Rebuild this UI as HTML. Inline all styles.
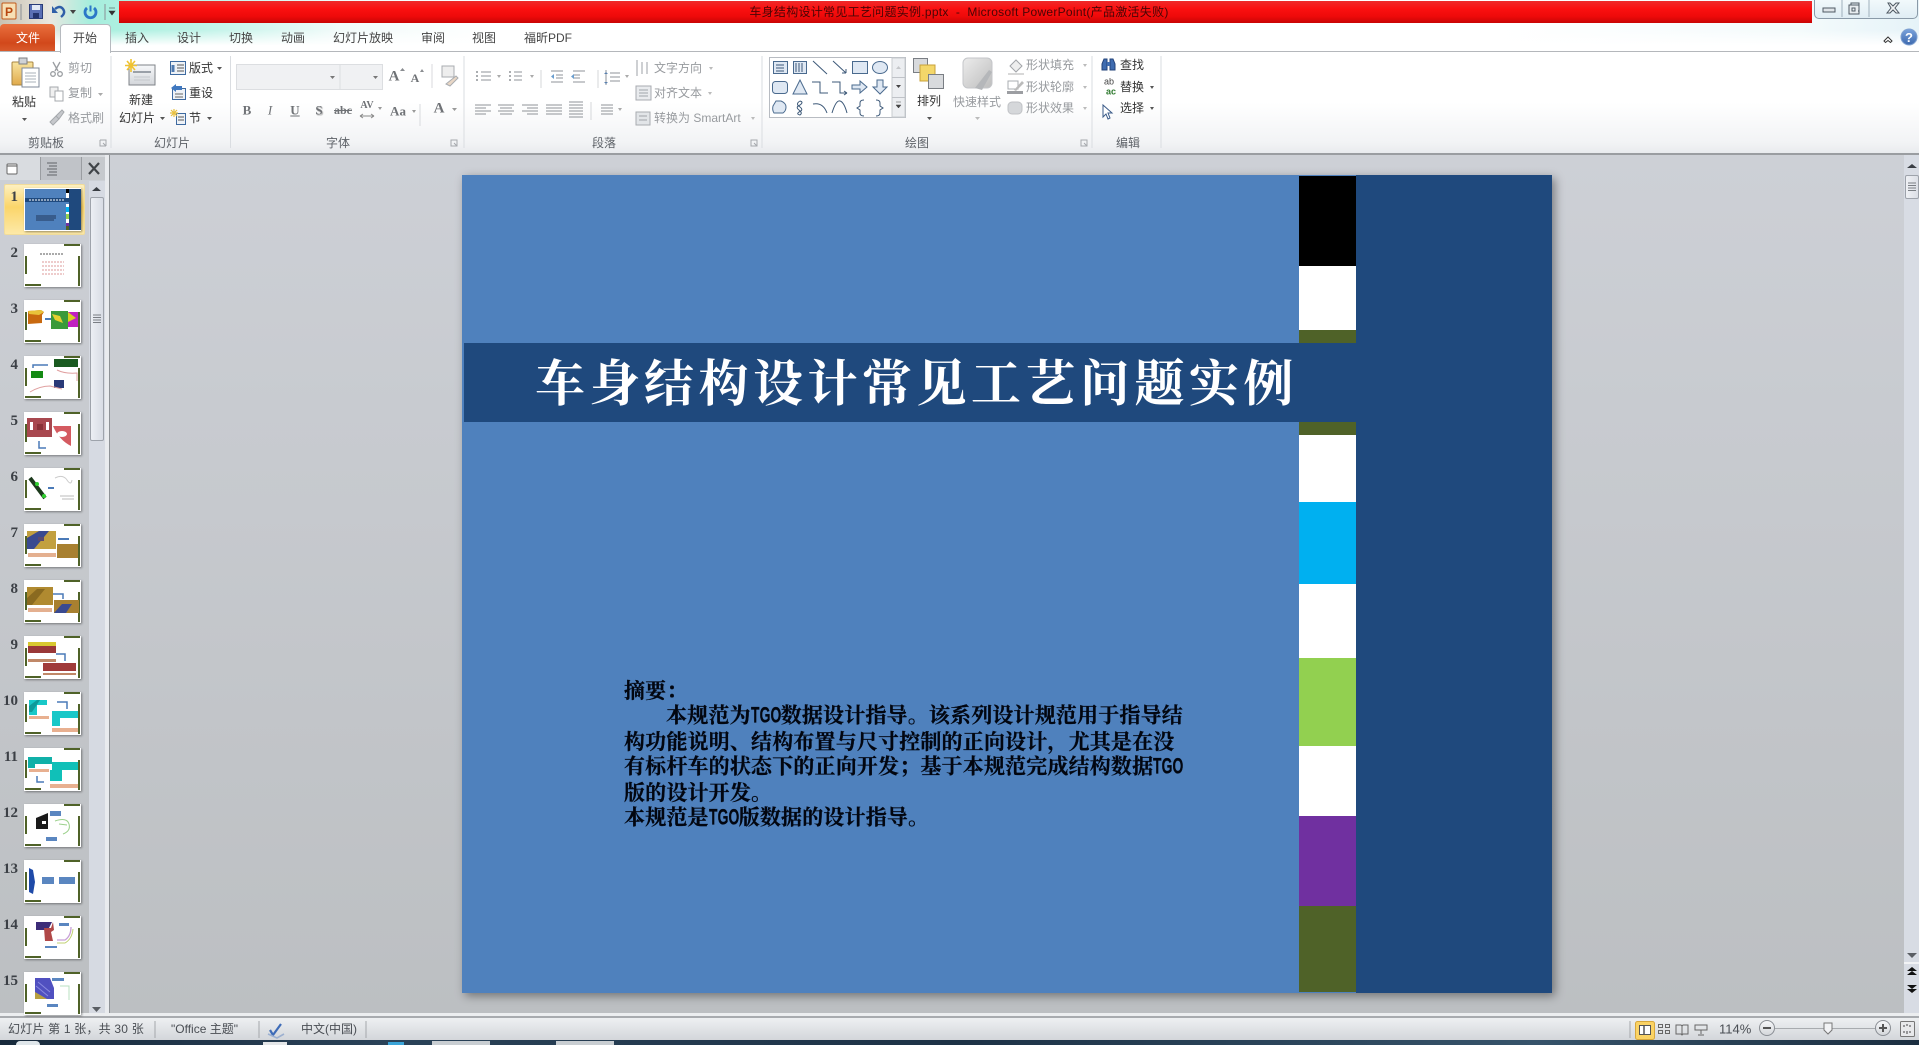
<!DOCTYPE html>
<html lang="zh-CN">
<head>
<meta charset="utf-8">
<title>PowerPoint</title>
<style>
html,body{margin:0;padding:0;width:1919px;height:1045px;overflow:hidden;background:#c4c7cb}
body{position:relative;font-family:"Liberation Sans","Noto Sans CJK SC",sans-serif;font-size:12px;color:#444}
.a{position:absolute}
.t{position:absolute;white-space:nowrap;transform:translateY(-50%);line-height:1}
.c{position:absolute;white-space:nowrap;transform:translate(-50%,-50%);line-height:1}
.g{color:#979a9e}
.lab{color:#5e6268}
.s{font-family:"Liberation Serif",serif;font-weight:700;color:#6f7276}
.n{position:absolute;font-family:"Liberation Serif",serif;font-weight:700;font-size:15px;color:#3c4046;text-align:right;width:20px;left:0;line-height:1}
.body{position:absolute;left:624px;white-space:nowrap;font-family:"Noto Serif CJK SC",serif;font-weight:700;font-size:21px;letter-spacing:.17px;line-height:26px;color:#020610;-webkit-text-stroke:.25px #020610;transform:translateY(-50%)}
.tg{display:inline-block;width:30px;overflow:visible}
.tg i{display:inline-block;font-style:normal;font-family:"Liberation Sans",sans-serif;font-weight:700;font-size:22px;transform:scaleX(.63);transform-origin:0 50%}
svg{position:absolute}
</style>
</head>
<body>

<!-- glass top -->
<div class="a" style="left:0;top:0;width:1919px;height:52px;background:linear-gradient(90deg,#c9c2b2 0,#e9e7e0 50px,#a6eedd 90px,#bff3e8 200px,#f2fbfa 340px,#fff 500px,#fff 1500px,#f4fbfc 1800px,#e6f3f8 1919px)"></div>
<div class="a" style="left:0;top:30px;width:1919px;height:22px;background:linear-gradient(180deg,rgba(255,255,255,0),#fff 70%)"></div>
<div class="a" style="left:119px;top:1px;width:1693px;height:22px;background:linear-gradient(180deg,#ee2a2a 0,#fb1010 35%,#ee0a0a 70%,#c90505 100%)"></div>
<div class="c" style="left:959px;top:12px;color:#480606;letter-spacing:.28px">车身结构设计常见工艺问题实例.pptx&nbsp; - &nbsp;Microsoft PowerPoint(产品激活失败)</div>

<!-- window buttons -->
<div class="a" style="left:1814px;top:-2px;width:102px;height:19px;border:1px solid #8a9aa8;border-radius:0 0 5px 5px;background:linear-gradient(180deg,#f3fafc,#e0edf4)"></div>

<!-- tabs -->
<div class="a" style="left:0;top:24px;width:55px;height:27px;border-radius:4px 4px 0 0;background:linear-gradient(180deg,#e9703e,#d2481b 70%,#d85a2c)"></div>
<div class="c" style="left:28px;top:38px;color:#fff">文件</div>
<div class="a" style="left:60px;top:24px;width:49px;height:28px;border:1px solid #b6babf;border-bottom:none;border-radius:4px 4px 0 0;background:#fff;z-index:2"></div>
<div class="c" style="left:85px;top:38px;z-index:3">开始</div>
<div class="c" style="left:137px;top:38px">插入</div>
<div class="c" style="left:189px;top:38px">设计</div>
<div class="c" style="left:241px;top:38px">切换</div>
<div class="c" style="left:293px;top:38px">动画</div>
<div class="c" style="left:363px;top:38px">幻灯片放映</div>
<div class="c" style="left:433px;top:38px">审阅</div>
<div class="c" style="left:484px;top:38px">视图</div>
<div class="c" style="left:548px;top:38px">福昕PDF</div>

<!-- ribbon -->
<div class="a" style="left:0;top:51px;width:1919px;height:102px;background:linear-gradient(180deg,#fff 0,#fff 50%,#f2f3f5 90%,#e9ebee 100%);border-top:1px solid #b4b7bb;box-sizing:border-box"></div>
<div class="a" style="left:0;top:153px;width:1919px;height:2px;background:#9a9da1"></div>

<!-- main background -->
<div class="a" style="left:0;top:155px;width:1919px;height:863px;background:linear-gradient(180deg,#cdd0d6 0,#bcbfc2 100%)"></div>

<!-- ribbon labels -->
<div class="c lab" style="left:46px;top:143px">剪贴板</div>
<div class="c lab" style="left:172px;top:143px">幻灯片</div>
<div class="c lab" style="left:338px;top:143px">字体</div>
<div class="c lab" style="left:604px;top:143px">段落</div>
<div class="c lab" style="left:917px;top:143px">绘图</div>
<div class="c lab" style="left:1128px;top:143px">编辑</div>

<div class="c" style="left:24px;top:102px;color:#333">粘贴</div>
<div class="t g" style="left:68px;top:68px">剪切</div>
<div class="t g" style="left:68px;top:93px">复制</div>
<div class="t g" style="left:68px;top:118px">格式刷</div>
<div class="c" style="left:141px;top:100px;color:#333">新建</div>
<div class="t" style="left:119px;top:118px;color:#333">幻灯片</div>
<div class="t" style="left:189px;top:68px;color:#333">版式</div>
<div class="t" style="left:189px;top:93px;color:#333">重设</div>
<div class="t" style="left:189px;top:118px;color:#333">节</div>
<div class="t g" style="left:343px;top:76px">32</div>

<div class="c s" style="left:394px;top:77px;font-size:15px">A</div>
<div class="c s" style="left:415px;top:78px;font-size:12px">A</div>
<div class="c s" style="left:247px;top:110px;font-size:13px">B</div>
<div class="c s" style="left:270px;top:110px;font-size:13px;font-style:italic;font-weight:400">I</div>
<div class="c s" style="left:295px;top:110px;font-size:13px;text-decoration:underline">U</div>
<div class="c s" style="left:319px;top:110px;font-size:13px;text-shadow:1px 1px 1px #aaa">S</div>
<div class="c s" style="left:343px;top:110px;font-size:12px;text-decoration:line-through">abc</div>
<div class="c s" style="left:367px;top:106px;font-size:10px">AV</div>
<div class="c s" style="left:398px;top:111px;font-size:13px">Aa</div>
<div class="c s" style="left:439px;top:109px;font-size:15px">A</div>

<div class="t g" style="left:654px;top:68px">文字方向</div>
<div class="t g" style="left:654px;top:93px">对齐文本</div>
<div class="t g" style="left:654px;top:118px">转换为 SmartArt</div>

<div class="c" style="left:929px;top:101px;color:#333">排列</div>
<div class="c g" style="left:977px;top:102px">快速样式</div>
<div class="t g" style="left:1026px;top:65px">形状填充</div>
<div class="t g" style="left:1026px;top:87px">形状轮廓</div>
<div class="t g" style="left:1026px;top:108px">形状效果</div>
<div class="t" style="left:1120px;top:65px;color:#333">查找</div>
<div class="t" style="left:1120px;top:87px;color:#333">替换</div>
<div class="t" style="left:1120px;top:108px;color:#333">选择</div>
<div class="c" style="left:1109px;top:82px;font-size:9px;color:#444">ab</div>
<div class="c" style="left:1111px;top:92px;font-size:9px;font-weight:700;color:#2f7a2f">ac</div>

<!-- left panel -->
<div class="a" style="left:0;top:155px;width:105px;height:2px;background:#d8dbdf"></div>
<div class="a" style="left:0;top:157px;width:40px;height:23px;background:#d9dce0"></div>
<div class="a" style="left:40px;top:157px;width:41px;height:23px;background:#c0c3c8;border-left:1px solid #9a9da1;box-sizing:border-box"></div>
<div class="a" style="left:81px;top:157px;width:24px;height:23px;background:#c6c9cd;border-left:1px solid #9a9da1;box-sizing:border-box"></div>
<div class="a" style="left:89px;top:181px;width:16px;height:836px;background:#d6dae2"></div>
<div class="a" style="left:90px;top:197px;width:14px;height:244px;background:linear-gradient(90deg,#eceff4,#d8dce4);border:1px solid #9ea3ab;box-sizing:border-box;border-radius:2px"></div>
<div class="a" style="left:105px;top:155px;width:5px;height:862px;background:#e9ebee;border-right:1px solid #8e9296;box-sizing:border-box"></div>
<div class="a" style="left:4px;top:184px;width:81px;height:51px;background:linear-gradient(180deg,#fdf0c0,#fbd56a 45%,#fde9a8);border:1px solid #f1dc9a;box-sizing:border-box;border-radius:2px"></div>

<div class="n" style="top:190px;left:-2px">1</div><div class="n" style="top:246px;left:-2px">2</div>
<div class="n" style="top:302px;left:-2px">3</div><div class="n" style="top:358px;left:-2px">4</div>
<div class="n" style="top:414px;left:-2px">5</div><div class="n" style="top:470px;left:-2px">6</div>
<div class="n" style="top:526px;left:-2px">7</div><div class="n" style="top:582px;left:-2px">8</div>
<div class="n" style="top:638px;left:-2px">9</div><div class="n" style="top:694px;left:-2px">10</div>
<div class="n" style="top:750px;left:-2px">11</div><div class="n" style="top:806px;left:-2px">12</div>
<div class="n" style="top:862px;left:-2px">13</div><div class="n" style="top:918px;left:-2px">14</div>
<div class="n" style="top:974px;left:-2px">15</div>

<!-- right scrollbar -->
<div class="a" style="left:1904px;top:155px;width:15px;height:858px;background:#d8dce4"></div>
<div class="a" style="left:1905px;top:175px;width:14px;height:24px;background:linear-gradient(90deg,#eff1f5,#dcdfe6);border:1px solid #9ea3ab;box-sizing:border-box;border-radius:2px"></div>
<div class="a" style="left:1904px;top:962px;width:15px;height:2px;background:#f2f3f5"></div>

<!-- slide -->
<div class="a" style="left:462px;top:175px;width:1090px;height:818px;background:#4f81bd;box-shadow:3px 3px 9px rgba(0,0,0,.4)"></div>
<div class="a" style="left:1356px;top:175px;width:196px;height:818px;background:#1f497d"></div>
<div class="a" style="left:1299px;top:176px;width:57px;height:90px;background:#000"></div>
<div class="a" style="left:1299px;top:266px;width:57px;height:64px;background:#fff"></div>
<div class="a" style="left:1299px;top:330px;width:57px;height:13px;background:#4f6228"></div>
<div class="a" style="left:464px;top:343px;width:892px;height:79px;background:#1f497d"></div>
<div class="a" style="left:1299px;top:422px;width:57px;height:13px;background:#4f6228"></div>
<div class="a" style="left:1299px;top:435px;width:57px;height:67px;background:#fff"></div>
<div class="a" style="left:1299px;top:502px;width:57px;height:82px;background:#00b0f0"></div>
<div class="a" style="left:1299px;top:584px;width:57px;height:74px;background:#fff"></div>
<div class="a" style="left:1299px;top:658px;width:57px;height:88px;background:#92d050"></div>
<div class="a" style="left:1299px;top:746px;width:57px;height:70px;background:#fff"></div>
<div class="a" style="left:1299px;top:816px;width:57px;height:90px;background:#7030a0"></div>
<div class="a" style="left:1299px;top:906px;width:57px;height:86px;background:#4f6228"></div>

<div class="t" style="left:535px;top:380px;font-family:'Noto Serif CJK SC',serif;font-weight:700;font-size:50px;letter-spacing:4.5px;color:#fff">车身结构设计常见工艺问题实例</div>

<div class="body" style="top:690px">摘要：</div>
<div class="body" style="top:715px;left:666px">本规范为<span class="tg"><i>TGO</i></span>数据设计指导。该系列设计规范用于指导结</div>
<div class="body" style="top:741px">构功能说明、结构布置与尺寸控制的正向设计，尤其是在没</div>
<div class="body" style="top:766px">有标杆车的状态下的正向开发；基于本规范完成结构数据<span class="tg"><i>TGO</i></span></div>
<div class="body" style="top:792px">版的设计开发。</div>
<div class="body" style="top:817px">本规范是<span class="tg"><i>TGO</i></span>版数据的设计指导。</div>

<!-- status bar -->
<div class="a" style="left:0;top:1013px;width:1919px;height:3px;background:#eceef0"></div>
<div class="a" style="left:0;top:1016px;width:1919px;height:2px;background:#a8abaf"></div>
<div class="a" style="left:0;top:1018px;width:1919px;height:22px;background:linear-gradient(180deg,#eef0f2,#d3d6da)"></div>
<div class="t" style="left:8px;top:1029px;color:#4a4e54;letter-spacing:.2px">幻灯片 第 1 张，共 30 张</div>
<div class="t" style="left:171px;top:1029px;color:#4a4e54">"Office 主题"</div>
<div class="t" style="left:301px;top:1029px;color:#4a4e54">中文(中国)</div>
<div class="t" style="left:1719px;top:1029px;font-size:13px;color:#4a4e54">114%</div>

<!-- taskbar -->
<div class="a" style="left:0;top:1040px;width:1919px;height:5px;background:linear-gradient(90deg,#182a3c,#2a4258 20%,#1d3246 50%,#36536a 80%,#1b2e40)"></div>
<div class="a" style="left:16px;top:1041px;width:24px;height:4px;background:#dfe6ea;border-radius:12px 12px 0 0"></div>
<div class="a" style="left:432px;top:1041px;width:58px;height:4px;background:#c9ced2"></div>
<div class="a" style="left:556px;top:1041px;width:58px;height:4px;background:#c9ced2"></div>
<div class="a" style="left:263px;top:1042px;width:24px;height:3px;background:#e4e6e8"></div>
<div class="a" style="left:388px;top:1042px;width:16px;height:3px;background:#3aa4d8"></div>

<!-- overlay icons -->
<svg width="1919" height="1045" viewBox="0 0 1919 1045" style="left:0;top:0;z-index:5">
<defs>
<linearGradient id="gb" x1="0" y1="0" x2="0" y2="1"><stop offset="0" stop-color="#f7f8fa"/><stop offset="1" stop-color="#d3d6da"/></linearGradient>
<linearGradient id="gy" x1="0" y1="0" x2="0" y2="1"><stop offset="0" stop-color="#f8e4a0"/><stop offset="1" stop-color="#e0a94a"/></linearGradient>
<linearGradient id="gq" x1="0" y1="0" x2="1" y2="1"><stop offset="0" stop-color="#ececec"/><stop offset="1" stop-color="#bdbdbd"/></linearGradient>
<linearGradient id="gh" x1="0" y1="0" x2="0" y2="1"><stop offset="0" stop-color="#7ba3dc"/><stop offset="1" stop-color="#3c69ae"/></linearGradient>
</defs>

<!-- QAT -->
<rect x="2" y="3" width="14" height="16" rx="1" fill="#f7e0b5" stroke="#c25a1a"/>
<text x="5" y="16" font-family="Liberation Sans,sans-serif" font-size="12" font-weight="700" fill="#b8470f">P</text>
<path d="M21 4v16" stroke="#8a8f95"/>
<rect x="29.500" y="4.500" width="13" height="14" fill="#5a6fb5" stroke="#2b3c78"/><rect x="32" y="5" width="8" height="5" fill="#e4e9f5"/><rect x="33" y="13" width="6" height="5" fill="#24346e"/>
<path d="M55 9q5-4 8 0t-2 8" fill="none" stroke="#2f5fa8" stroke-width="2.400"/><path d="M52 6v7h6z" fill="#2f5fa8"/>
<path d="M70 10h6l-3 4z" fill="#444"/>
<path d="M87 8a5.500 5.500 0 1 0 7 0" fill="none" stroke="#2b78c8" stroke-width="2.800"/><path d="M90.500 5.500v6" stroke="#2b78c8" stroke-width="2"/>
<path d="M105 4v16" stroke="#8a8f95"/><path d="M109 8h6M109 11h6l-3 4z" fill="#333" stroke="#333" stroke-width=".6"/>

<!-- window glyphs -->
<path d="M1842 -1v18M1869 -1v18" stroke="#9fb0bc"/>
<rect x="1823" y="8" width="12" height="4" fill="#dfe4e8" stroke="#4f5a64"/>
<rect x="1849" y="5" width="10" height="9" fill="#e8edf0" stroke="#4f5a64"/><path d="M1851 5V3h8v8h-1" fill="none" stroke="#4f5a64"/><rect x="1852" y="8" width="3" height="3" fill="none" stroke="#4f5a64"/>
<path d="M1888 3l2-0 3 3 3-3h3l-4 5 4 5h-3l-3-3-3 3h-3l4-5z" fill="#eef1f3" stroke="#4f5a64"/>

<!-- chevron + help -->
<path d="M1884 41l4-4 4 4-1.500 1.500-2.500-2-2.500 2z" fill="#fff" stroke="#333"/>
<circle cx="1909" cy="37" r="8" fill="url(#gh)" stroke="#7fa0d0"/>
<text x="1909" y="42" text-anchor="middle" font-family="Liberation Sans,sans-serif" font-size="13" font-weight="700" fill="#fff">?</text>

<!-- group separators -->
<path d="M111 56v92M230.500 56v92M464 56v92M762 56v92M1092 56v92M1161 56v92" stroke="#dadde1"/>
<!-- dialog launchers -->
<g fill="none" stroke="#a5a8ac"><path d="M100 140h6v6M100 140v6h6M103 143l3 3"/><path d="M451 140h6v6h-6zM454 143l3 3"/><path d="M751 140h6v6h-6zM754 143l3 3"/><path d="M1081 140h6v6h-6zM1084 143l3 3"/></g>

<!-- paste -->
<rect x="12" y="62" width="21" height="23" rx="1" fill="url(#gy)" stroke="#a88540"/>
<rect x="19" y="58" width="8" height="6" fill="#cfd2d6" stroke="#7c7f83"/>
<rect x="22" y="68" width="17" height="19" fill="#fff" stroke="#7f8a99"/>
<path d="M25 73h11M25 76h11M25 79h11M25 82h11" stroke="#a8b0ba"/>
<path d="M22 118h5l-2.500 3z" fill="#555"/>
<!-- cut/copy/brush -->
<g stroke="#9a9da1" fill="none" stroke-width="1.300"><path d="M53 62l5 9M60 62l-5 9"/><circle cx="53" cy="74" r="2.300"/><circle cx="60" cy="74" r="2.300"/></g>
<rect x="50" y="87" width="8" height="10" fill="#f0f0f0" stroke="#a5a8ac"/><rect x="55" y="91" width="8" height="10" fill="#fff" stroke="#a5a8ac"/>
<path d="M50 122l6-6 3 3-6 6zM56 116l6-6 2 2-5 7z" fill="#c6c8cc" stroke="#a5a8ac"/>
<path d="M98 93h5l-2.500 3z" fill="#aaa"/>

<!-- new slide -->
<rect x="129" y="65" width="26" height="20" fill="url(#gb)" stroke="#7f8388"/>
<path d="M133 72h18" stroke="#9aa0a8" stroke-width="2"/><path d="M134 77h16M134 80h16" stroke="#c4c8cc"/>
<path d="M131 59v13M125 65.500h12M127 61l8 9M135 61l-8 9" stroke="#f0c330" stroke-width="1.600"/>
<path d="M160 117h5l-2.500 3z" fill="#555"/>
<!-- layout/reset/section -->
<rect x="170.500" y="61.500" width="15" height="13" fill="#eef2f7" stroke="#3e6aa0"/><path d="M173 65v7" stroke="#4f7ab0" stroke-width="3"/><path d="M177 65h7M177 68h7M177 71h7" stroke="#555"/>
<path d="M217 67h5l-2.500 3z" fill="#555"/>
<rect x="172.500" y="88.500" width="13" height="11" fill="#eef2f7" stroke="#3e6aa0"/><path d="M171 88l5-4v2h6v4h-6v2z" fill="#3f78c0"/><path d="M175 94h8M175 97h8" stroke="#666"/>
<rect x="176.500" y="113.500" width="9" height="11" fill="#eef2f7" stroke="#3e6aa0"/><path d="M178 117h6M178 120h6" stroke="#555"/>
<path d="M174 109v8M170 113h8M171 110l6 6M177 110l-6 6" stroke="#e8c040" stroke-width="1.200"/>
<path d="M207 117h5l-2.500 3z" fill="#555"/>

<!-- font combos -->
<rect x="236.500" y="64.500" width="146" height="25" fill="#f0f1f3" stroke="#dcdee1"/><path d="M340 64v25" stroke="#dcdee1"/>
<path d="M330 76h5l-2.500 3z" fill="#777"/><path d="M373 76h5l-2.500 3z" fill="#777"/>
<path d="M400 71l2.500-3 2.500 3zM420 72l2-3 2 3z" fill="#8a8d91"/>
<path d="M432 64v24M420 104v22" stroke="#d8dadd"/>
<rect x="442" y="66" width="12" height="11" fill="#eee" stroke="#a9acb0"/><path d="M446 84l10-8 2 2-8 8z" fill="#e9d7c6" stroke="#a9acb0"/>
<path d="M378 107h4l-2 3zM412 110h4l-2 3zM452 108h5l-2.500 3z" fill="#999"/>
<path d="M360 116h14M360 116l3-2M360 116l3 2M374 116l-3-2M374 116l-3 2" fill="none" stroke="#888"/>

<!-- paragraph -->
<g stroke="#8f9398" fill="none">
<path d="M481 72h10M481 76h10M481 80h10"/><path d="M528 72h8M528 76h8M528 80h8" transform="translate(-14 0)"/>
<path d="M551 71h12M556 75h7M556 78h7M551 82h12"/><path d="M573 71h12M573 75h7M573 78h7M573 82h12"/>
<path d="M610 73h10M610 77h10M610 81h10"/><path d="M606 70v15"/>
<path d="M475 105h16M475 108h11M475 111h16M475 114h11"/>
<path d="M498 105h16M500 108h12M498 111h16M500 114h12"/>
<path d="M522 105h16M527 108h11M522 111h16M527 114h11"/>
<path d="M546 105h16M546 108h16M546 111h16M546 114h16"/>
<path d="M569 102h14M569 105h14M569 108h14M569 111h14M569 114h14M569 117h14"/>
<path d="M601 105h12M601 108h12M601 111h12M601 114h12"/>
</g>
<g fill="#8f9398"><circle cx="477" cy="72" r="1"/><circle cx="477" cy="76" r="1"/><circle cx="477" cy="80" r="1"/><circle cx="510" cy="72" r="1"/><circle cx="510" cy="76" r="1"/><circle cx="510" cy="80" r="1"/></g>
<path d="M497 75h4l-2 3zM530 75h4l-2 3zM625 75h4l-2 3zM618 108h4l-2 3z" fill="#aaa"/>
<path d="M541 70v18M598 70v18M591 102v18" stroke="#d5d7da"/>
<path d="M551 76.500l3-2.500v5zM571 76.500l3-2.500v5z" fill="#6b9fd0"/>
<path d="M606 72l-2 2h4zM606 84l-2-2h4z" fill="#5a80ae"/>
<!-- text dir / align / smartart -->
<g stroke="#9ea2a7" fill="none"><path d="M637 60v16M642 62v12M647 62v12"/></g>
<rect x="636" y="86" width="15" height="14" fill="#e9ebee" stroke="#a8abb0"/><path d="M639 90h9M639 93h9M639 96h9" stroke="#a0a4a9"/>
<rect x="636" y="112" width="14" height="13" fill="#e2e5e8" stroke="#a8abb0"/><path d="M639 116h8M639 120h8" stroke="#a0a4a9"/>
<path d="M709 67h4l-2 3zM708 92h4l-2 3zM751 117h4l-2 3z" fill="#bbb"/>

<!-- shape gallery -->
<rect x="769.500" y="57.500" width="136" height="60" fill="#fff" stroke="#b8bcc2"/>
<rect x="892" y="58" width="13" height="59" fill="#eceef1" stroke="#c9ccd0"/><path d="M892 77.500h13M892 97.500h13" stroke="#c0c3c8"/>
<path d="M896 69l2.500-3 2.500 3z" fill="#c5c7ca"/><path d="M896 85h5l-2.500 3z" fill="#444"/><path d="M896 102h5M896 105h5l-2.500 3z" stroke="#444" fill="#444" stroke-width=".5"/>
<g stroke="#4a6a8e" fill="#dfe8f3" stroke-width="1">
<rect x="773.500" y="61.500" width="14" height="12"/><rect x="793.500" y="61.500" width="13" height="12"/>
<rect x="852.500" y="61.500" width="15" height="12"/><ellipse cx="880" cy="67.500" rx="7.500" ry="6"/>
<rect x="772.500" y="81.500" width="15" height="12" rx="3"/><path d="M800 80l7 14h-14z"/>
<path d="M852 85h8v-4l7 6-7 6v-4h-8z"/><path d="M877 80h6v7h4l-7 7-7-7h4z"/>
<path d="M773 106l3-5h5q5 2 5 6q0 4-3 6h-9q-2-3-1-7z"/>
</g>
<g stroke="#3c5878" fill="none" stroke-width="1">
<path d="M776 65h8M776 68h8M776 71h8"/><path d="M796 63v9M799 63v9M802 63v9"/>
<path d="M813 61l14 13"/><path d="M833 61l13 12M846 73v-4M846 73h-4"/>
<path d="M812 82h8v11h8"/><path d="M832 82h8v11h7M847 93l-3-2M847 93l-3 2"/>
<path d="M800 101q-5 3 0 6q4 3-1 5q-3 2 1 3q3-2-1-5q-4-3 1-5q4-3 0-4"/>
<path d="M813 104q10-2 14 9"/><path d="M832 113q4-13 8-12q4 1 7 12"/>
<path d="M864 100q-4 0-4 3v3l-3 2 3 2v3q0 3 4 3"/><path d="M876 100q4 0 4 3v3l3 2-3 2v3q0 3-4 3"/>
</g>

<!-- arrange -->
<rect x="913.500" y="58.500" width="14" height="14" fill="#d8dadd" stroke="#7a7e84"/>
<rect x="920" y="65" width="15" height="16" fill="#f4d76a" stroke="#c8a23a"/>
<rect x="928.500" y="74.500" width="15" height="14" fill="#d8dadd" stroke="#7a7e84"/>
<path d="M927 117h5l-2.500 3z" fill="#555"/>
<!-- quick style -->
<rect x="963" y="58" width="29" height="30" rx="5" fill="url(#gq)" stroke="#c4c6c9"/>
<path d="M975 88l14-18 3 2-10 18z" fill="#b5b7ba"/>
<path d="M975 117h5l-2.500 3z" fill="#bbb"/>
<!-- shape fill etc -->
<path d="M1010 66l6-6 6 6-6 6z" fill="#eee" stroke="#a2a5a9"/><path d="M1008 73h16v2h-16z" fill="#d8d8d8"/>
<path d="M1008 81h10v8h-10z" fill="#fff" stroke="#a9acb0"/><path d="M1014 90l8-9 2 2-8 8z" fill="#bbb"/><rect x="1007" y="91" width="16" height="3" fill="#9c9ea2"/>
<rect x="1008" y="102" width="14" height="12" rx="4" fill="#d5d7da" stroke="#c0c2c5"/>
<path d="M1083 64h4l-2 3zM1083 86h4l-2 3zM1083 107h4l-2 3z" fill="#bbb"/>
<!-- find/replace/select -->
<path d="M1102 70v-6l2-5h3v11zM1110 70V59h3l2 5v6z" fill="#3f6cb0" stroke="#23437a"/><rect x="1107" y="62" width="3" height="4" fill="#3f6cb0"/>
<path d="M1103 105v12l3-3 2 5 2-1-2-5h4z" fill="#fff" stroke="#3a5a88"/>
<path d="M1150 86h4l-2 3zM1150 107h4l-2 3z" fill="#555"/>

<!-- panel tabs -->
<rect x="7" y="164" width="10" height="10" rx="1" fill="#fff" stroke="#666"/><path d="M7.500 166h9" stroke="#555"/>
<path d="M47 163h10M49 166h8M47 169h10M49 172h8M47 175h10" stroke="#5f6368"/>
<path d="M89 163l10 11M99 163l-10 11" stroke="#404448" stroke-width="2.200"/>
<path d="M92 191l4.500-4 4.500 4z" fill="#3a3e44"/><path d="M92 1007h9l-4.500 5z" fill="#5a5e64"/>
<path d="M93 315h8M93 317.500h8M93 320h8M93 322.500h8" stroke="#7a7e84"/>
<!-- main scroll -->
<path d="M1907 168l5-4 5 4z" fill="#3a3e44"/><path d="M1908 183h8M1908 185.500h8M1908 188h8M1908 190.500h8" stroke="#7a7e84"/>
<path d="M1907 953h10l-5 5z" fill="#5a5e64"/>
<path d="M1907 971l5-4 5 4zM1907 975l5-4 5 4z" fill="#111"/><path d="M1907 985h10l-5 4zM1907 989h10l-5 4z" fill="#111"/>

<!-- status -->
<path d="M155 1021v17M259 1021v17M366 1021v17M1630 1021v17" stroke="#a4a7ab"/>
<path d="M270 1030l3 5 8-11" stroke="#3e6cb8" fill="none" stroke-width="2.200"/><path d="M268 1034l9 4 7-4" stroke="#9cb0d0" fill="none" stroke-width="1.600"/>
<rect x="1635.500" y="1021.500" width="19" height="18" rx="2" fill="#fbd364" stroke="#d8a83c"/>
<rect x="1639.500" y="1025.500" width="11" height="9" fill="#fff" stroke="#555"/><path d="M1644 1025v10" stroke="#555" stroke-width="1.500"/>
<g fill="none" stroke="#666"><rect x="1658.500" y="1024.500" width="4" height="3"/><rect x="1665.500" y="1024.500" width="4" height="3"/><rect x="1658.500" y="1030.500" width="4" height="3"/><rect x="1665.500" y="1030.500" width="4" height="3"/>
<path d="M1676 1025h5l1 1 1-1h5v9h-5l-1 1-1-1h-5zM1682 1026v8"/>
<path d="M1695 1025h12v5h-12zM1701 1030v4M1698 1035h6"/></g>
<circle cx="1767" cy="1028" r="7.500" fill="url(#gb)" stroke="#8a8e94"/><path d="M1763 1028h8" stroke="#555" stroke-width="2"/>
<path d="M1775 1028.500h100" stroke="#a8abaf"/>
<path d="M1824 1023h8v7l-4 4-4-4z" fill="#f2f3f5" stroke="#777"/>
<circle cx="1883" cy="1028" r="7.500" fill="url(#gb)" stroke="#8a8e94"/><path d="M1879 1028h8M1883 1024v8" stroke="#555" stroke-width="2"/>
<rect x="1900.500" y="1021.500" width="14" height="15" rx="1" fill="#e8e9eb" stroke="#777"/><path d="M1903 1026h2M1909 1026h2M1903 1032h2M1909 1032h2M1907 1024v2M1907 1031v3" stroke="#444"/>
</svg>

<!-- thumbnails -->
<svg width="57" height="44" viewBox="0 0 57 44" style="left:24px;top:188px;z-index:6;filter:drop-shadow(1px 1px 1px rgba(0,0,0,.4))">
<rect width="57" height="43" fill="#fff"/><rect x="1" y="1" width="56" height="41" fill="#4f81bd"/><rect x="45" y="1" width="12" height="41" fill="#1f497d"/><rect x="42" y="1" width="3" height="4" fill="#000"/><rect x="42" y="5" width="3" height="5" fill="#fff"/><rect x="1" y="10" width="44" height="4" fill="#1f497d"/><path d="M5 12h36" stroke="#fff" stroke-dasharray="2 1"/><rect x="42" y="16" width="3" height="3" fill="#fff"/><rect x="42" y="19" width="3" height="5" fill="#00b0f0"/><rect x="42" y="24" width="3" height="2" fill="#fff"/><rect x="42" y="26" width="3" height="5" fill="#92d050"/><rect x="42" y="31" width="3" height="4" fill="#fff"/><rect x="42" y="35" width="3" height="3" fill="#7030a0"/><rect x="42" y="38" width="3" height="4" fill="#4f6228"/><path d="M12 28h20M12 30h20M12 32h18" stroke="#22385a"/></svg>

<svg width="57" height="44" viewBox="0 0 57 44" style="left:24px;top:244px;z-index:6;filter:drop-shadow(1px 1px 1px rgba(0,0,0,.4))"><rect width="57" height="43" fill="#fff"/><path d="M40 0h16v2H40zM54 12h2v30h-2zM1 40h16v2H1zM1 12h2v18H1z" fill="#4f6228"/><path d="M16 10h24" stroke="#555" stroke-dasharray="2 1"/><path d="M18 18h22M18 22h22M18 26h22M18 30h22" stroke="#dd9a9a" stroke-dasharray="2 1"/></svg>

<svg width="57" height="44" viewBox="0 0 57 44" style="left:24px;top:300px;z-index:6;filter:drop-shadow(1px 1px 1px rgba(0,0,0,.4))"><rect width="57" height="43" fill="#fff"/><path d="M40 0h16v2H40zM54 12h2v30h-2zM1 40h16v2H1zM1 12h2v18H1z" fill="#4f6228"/><path d="M4 11l13-1 3 2-2 3v8l-14 1z" fill="#c8690f"/><path d="M4 11l13-1 3 2-5 3-10-1z" fill="#e8c33a"/><path d="M21 19h7" stroke="#4a7ab8" stroke-width="2"/><rect x="27" y="11" width="17" height="18" fill="#3a9a3a"/><path d="M28 14l8 2 3 7-8-3z" fill="#e5d030"/><rect x="44" y="12" width="10" height="15" fill="#c020c0"/><path d="M44 12l8 6-8 4z" fill="#d8d020"/></svg>

<svg width="57" height="44" viewBox="0 0 57 44" style="left:24px;top:356px;z-index:6;filter:drop-shadow(1px 1px 1px rgba(0,0,0,.4))"><rect width="57" height="43" fill="#fff"/><path d="M40 0h16v2H40zM54 12h2v30h-2zM1 40h16v2H1zM1 12h2v18H1z" fill="#4f6228"/><rect x="30" y="3" width="24" height="8" fill="#1a5a20"/><rect x="7" y="15" width="12" height="7" fill="#148a14"/><path d="M9 12v-3h15" stroke="#4a7ab8" fill="none" stroke-width="1.500"/><rect x="30" y="24" width="10" height="8" fill="#2a3a78"/><path d="M6 36q10-6 20-6l12 3M33 14q8 4 20 3v8" stroke="#e0a0a0" fill="none"/></svg>

<svg width="57" height="44" viewBox="0 0 57 44" style="left:24px;top:412px;z-index:6;filter:drop-shadow(1px 1px 1px rgba(0,0,0,.4))"><rect width="57" height="43" fill="#fff"/><path d="M40 0h16v2H40zM54 12h2v30h-2zM1 40h16v2H1zM1 12h2v18H1z" fill="#4f6228"/><rect x="3" y="6" width="25" height="19" fill="#a8484f"/><rect x="6" y="10" width="3" height="8" fill="#fff"/><rect x="22" y="10" width="3" height="8" fill="#fff"/><rect x="13" y="12" width="6" height="6" fill="#8a3238"/><path d="M29 14l18 0v20q-12-6-18-20z" fill="#d45a60"/><ellipse cx="38" cy="22" rx="5" ry="3" fill="#fff"/><path d="M15 29v7h7" stroke="#4a7ab8" fill="none" stroke-width="1.500"/></svg>

<svg width="57" height="44" viewBox="0 0 57 44" style="left:24px;top:468px;z-index:6;filter:drop-shadow(1px 1px 1px rgba(0,0,0,.4))"><rect width="57" height="43" fill="#fff"/><path d="M40 0h16v2H40zM54 12h2v30h-2zM1 40h16v2H1zM1 12h2v18H1z" fill="#4f6228"/><path d="M6 10l15 20" stroke="#1c3a1c" stroke-width="4"/><circle cx="13" cy="16" r="2" fill="#2fd02f"/><circle cx="20" cy="28" r="2" fill="#2fd02f"/><path d="M24 20h6" stroke="#4a7ab8" stroke-width="2"/><path d="M31 10q8-4 12 2t5 0" stroke="#ccc" fill="none"/><path d="M36 28h14M38 31h12" stroke="#bbb"/></svg>

<svg width="57" height="44" viewBox="0 0 57 44" style="left:24px;top:524px;z-index:6;filter:drop-shadow(1px 1px 1px rgba(0,0,0,.4))"><rect width="57" height="43" fill="#fff"/><path d="M40 0h16v2H40zM54 12h2v30h-2zM1 40h16v2H1zM1 12h2v18H1z" fill="#4f6228"/><rect x="3" y="7" width="29" height="18" fill="#c2a040"/><path d="M3 14l12-7h10l-15 18H3z" fill="#3a4a90"/><rect x="14" y="13" width="6" height="4" fill="#5a4a70"/><rect x="34" y="14" width="11" height="2" fill="#4a7ab8"/><rect x="33" y="20" width="21" height="14" fill="#a88030"/><rect x="4" y="29" width="28" height="4" fill="#e4b090"/></svg>

<svg width="57" height="44" viewBox="0 0 57 44" style="left:24px;top:580px;z-index:6;filter:drop-shadow(1px 1px 1px rgba(0,0,0,.4))"><rect width="57" height="43" fill="#fff"/><path d="M40 0h16v2H40zM54 12h2v30h-2zM1 40h16v2H1zM1 12h2v18H1z" fill="#4f6228"/><rect x="3" y="7" width="26" height="18" fill="#b08a30"/><path d="M3 18l10-9h8L8 25H3z" fill="#8a6a20"/><rect x="30" y="20" width="25" height="13" fill="#a88030"/><path d="M30 33l8-9h10l-6 9z" fill="#3a4a90"/><path d="M29 14h10v5" stroke="#4a7ab8" fill="none" stroke-width="1.500"/><rect x="4" y="28" width="24" height="4" fill="#e4b090"/></svg>

<svg width="57" height="44" viewBox="0 0 57 44" style="left:24px;top:636px;z-index:6;filter:drop-shadow(1px 1px 1px rgba(0,0,0,.4))"><rect width="57" height="43" fill="#fff"/><path d="M40 0h16v2H40zM54 12h2v30h-2zM1 40h16v2H1zM1 12h2v18H1z" fill="#4f6228"/><rect x="4" y="6" width="28" height="4" fill="#d8c830"/><rect x="4" y="10" width="28" height="7" fill="#9a3838"/><rect x="4" y="23" width="28" height="3" fill="#c08868"/><path d="M32 18h9v7" stroke="#4a7ab8" fill="none" stroke-width="1.500"/><rect x="19" y="27" width="33" height="8" fill="#a03a3a"/><rect x="19" y="37" width="33" height="2" fill="#c08868"/></svg>

<svg width="57" height="44" viewBox="0 0 57 44" style="left:24px;top:692px;z-index:6;filter:drop-shadow(1px 1px 1px rgba(0,0,0,.4))"><rect width="57" height="43" fill="#fff"/><path d="M40 0h16v2H40zM54 12h2v30h-2zM1 40h16v2H1zM1 12h2v18H1z" fill="#4f6228"/><path d="M5 8h18v5H13v10H5z" fill="#18c8c8"/><path d="M5 14l8-6h3l-8 12H5z" fill="#0e9a9a"/><rect x="5" y="24" width="20" height="3" fill="#e8b090"/><path d="M33 10h10v7" stroke="#4a7ab8" fill="none" stroke-width="1.500"/><path d="M28 19h26v7H36v8h-8z" fill="#18c8c8"/><rect x="28" y="36" width="26" height="4" fill="#e8b090"/></svg>

<svg width="57" height="44" viewBox="0 0 57 44" style="left:24px;top:748px;z-index:6;filter:drop-shadow(1px 1px 1px rgba(0,0,0,.4))"><rect width="57" height="43" fill="#fff"/><path d="M40 0h16v2H40zM54 12h2v30h-2zM1 40h16v2H1zM1 12h2v18H1z" fill="#4f6228"/><path d="M4 9h24v7H11v4H4z" fill="#10b0a8"/><rect x="5" y="21" width="20" height="3" fill="#e8b090"/><path d="M28 14h26v8H38v11H26V22h2z" fill="#10c0b8"/><path d="M13 28v6h7" stroke="#4a7ab8" fill="none" stroke-width="1.500"/><rect x="26" y="36" width="28" height="4" fill="#e8b090"/></svg>

<svg width="57" height="44" viewBox="0 0 57 44" style="left:24px;top:804px;z-index:6;filter:drop-shadow(1px 1px 1px rgba(0,0,0,.4))"><rect width="57" height="43" fill="#fff"/><path d="M40 0h16v2H40zM54 12h2v30h-2zM1 40h16v2H1zM1 12h2v18H1z" fill="#4f6228"/><path d="M12 14l12-5v16H12z" fill="#1a1a1a"/><rect x="18" y="17" width="4" height="3" fill="#fff"/><rect x="26" y="7" width="11" height="5" fill="#5a86c0"/><path d="M31 17q12-4 14 3t-6 10M35 20l8 1" stroke="#9ad08a" fill="none"/><rect x="22" y="33" width="11" height="4" fill="#5a86c0"/></svg>

<svg width="57" height="44" viewBox="0 0 57 44" style="left:24px;top:860px;z-index:6;filter:drop-shadow(1px 1px 1px rgba(0,0,0,.4))"><rect width="57" height="43" fill="#fff"/><path d="M40 0h16v2H40zM54 12h2v30h-2zM1 40h16v2H1zM1 12h2v18H1z" fill="#4f6228"/><path d="M5 8l4 2 2 12-2 12-4-2z" fill="#1e4aa8"/><rect x="18" y="17" width="12" height="7" fill="#5a86c0"/><rect x="35" y="17" width="16" height="7" fill="#5a86c0"/></svg>

<svg width="57" height="44" viewBox="0 0 57 44" style="left:24px;top:916px;z-index:6;filter:drop-shadow(1px 1px 1px rgba(0,0,0,.4))"><rect width="57" height="43" fill="#fff"/><path d="M40 0h16v2H40zM54 12h2v30h-2zM1 40h16v2H1zM1 12h2v18H1z" fill="#4f6228"/><path d="M12 6h16l-4 8H12z" fill="#3c2c78"/><path d="M20 12h7l2-6 1 8-3 2 2 9H21z" fill="#b04848"/><rect x="35" y="7" width="10" height="3" fill="#5a86c0"/><path d="M33 24h8q6-4 6-13" stroke="#c8a0d8" fill="none" stroke-width="1.300"/><path d="M33 27h8q7-4 8-14" stroke="#c0d070" fill="none"/><rect x="21" y="30" width="12" height="2" fill="#5a86c0"/></svg>

<svg width="57" height="44" viewBox="0 0 57 44" style="left:24px;top:972px;z-index:6;filter:drop-shadow(1px 1px 1px rgba(0,0,0,.4))"><rect width="57" height="43" fill="#fff"/><path d="M40 0h16v2H40zM54 12h2v30h-2zM1 40h16v2H1zM1 12h2v18H1z" fill="#4f6228"/><path d="M11 6h15l4 10v11H11z" fill="#5050c0"/><path d="M11 20l12 7H11z" fill="#b8a040"/><path d="M14 10l12 10M12 14l12 10" stroke="#8a8ae0"/><rect x="28" y="6" width="12" height="3" fill="#5a86c0"/><path d="M36 14h9v14" stroke="#b8e0c0" fill="none"/><rect x="23" y="32" width="11" height="3" fill="#5a86c0"/></svg>

</body>
</html>
